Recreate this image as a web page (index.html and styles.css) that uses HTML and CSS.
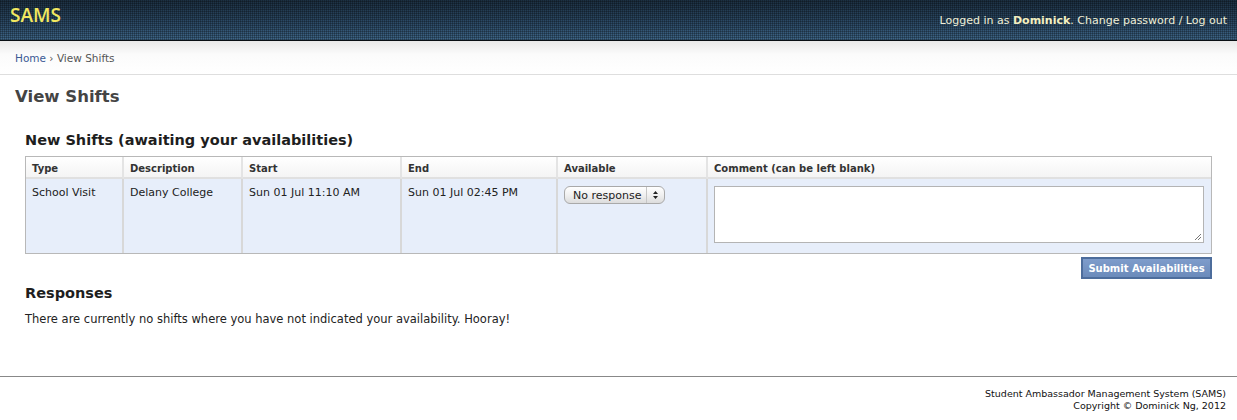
FILE: index.html
```html
<!DOCTYPE html>
<html>
<head>
<meta charset="utf-8">
<title>SAMS - View Shifts</title>
<link rel="stylesheet" href="styles.css">
</head>
<body>
<header class="topbar">
  <div class="brand">SAMS</div>
  <div class="userinfo">Logged in as <b>Dominick</b>. Change password / Log out</div>
</header>
<div class="crumbs"><a class="crumb-link">Home</a> › View Shifts</div>
<main class="content">
  <h1 class="page-title">View Shifts</h1>
  <section class="block">
    <h2 class="block-title">New Shifts (awaiting your availabilities)</h2>
    <table class="shifts">
      <thead>
        <tr>
          <th class="c-type">Type</th>
          <th class="c-desc">Description</th>
          <th class="c-start">Start</th>
          <th class="c-end">End</th>
          <th class="c-avail">Available</th>
          <th class="c-comment">Comment (can be left blank)</th>
        </tr>
      </thead>
      <tbody>
        <tr>
          <td>School Visit</td>
          <td>Delany College</td>
          <td>Sun 01 Jul 11:10 AM</td>
          <td>Sun 01 Jul 02:45 PM</td>
          <td><div class="select"><span class="select-label">No response</span><span class="select-arrows"><svg width="7" height="10" viewBox="0 0 7 10"><path d="M3.5 1 L6 4 H1 Z M3.5 9 L6 6 H1 Z" fill="#222"/></svg></span></div></td>
          <td><div class="textarea"><svg class="grip" width="8" height="8" viewBox="0 0 8 8"><path d="M7 1 L1 7 M7 4 L4 7" stroke="#777" stroke-width="1"/></svg></div></td>
        </tr>
      </tbody>
    </table>
    <div class="actions"><button class="submit">Submit Availabilities</button></div>
    <h2 class="block-title resp">Responses</h2>
    <p class="note">There are currently no shifts where you have not indicated your availability. Hooray!</p>
  </section>
</main>
<footer class="footer">
  <div>Student Ambassador Management System (SAMS)</div>
  <div>Copyright © Dominick Ng, 2012</div>
</footer>
</body>
</html>
```
FILE: styles.css
```css
html, body { margin: 0; padding: 0; background: #fff; }
body {
  font-family: "DejaVu Sans", "Liberation Sans", sans-serif;
  font-size: 11px;
  color: #222;
}
.topbar {
  height: 40px;
  border-bottom: 1px solid #0a0f14;
  display: flex;
  align-items: center;
  justify-content: space-between;
  padding: 0 10px;
  background-color: #26405a;
  background-image:
    repeating-linear-gradient(90deg, rgba(0,0,0,0.25) 0 1px, transparent 1px 2px),
    repeating-linear-gradient(0deg, rgba(0,0,0,0.25) 0 1px, transparent 1px 2px),
    linear-gradient(180deg, #1c3042 0%, #2d4c69 60%, #3e6688 100%);
}
.brand {
  font-family: "Open Sans", "DejaVu Sans", sans-serif;
  color: #f2e860;
  font-size: 19px;
  font-weight: 600;
  margin-top: -10px;
}
.userinfo {
  color: #f0efd6;
  font-size: 11px;
  margin-top: 1px;
}
.userinfo b { color: #f4f0c0; }
.crumbs {
  height: 32px;
  line-height: 33px;
  padding: 1px 0 0 15px;
  border-bottom: 1px solid #dedede;
  background: linear-gradient(180deg, #e9e9e9 0%, #fbfbfb 40%, #ffffff 100%);
  color: #555;
  font-size: 10.5px;
}
.crumb-link { color: #3a5a94; }
.content { padding: 0 15px; }
.page-title {
  margin: 11px 0 0 0;
  font-size: 16.5px;
  line-height: 22px;
  color: #444;
}
.block { padding-left: 10px; }
.block-title {
  margin: 21px 0 0 0;
  font-size: 14.5px;
  line-height: 22px;
  color: #1e1e1e;
}
.shifts {
  margin-top: 5px;
  width: 1187px;
  border-collapse: separate;
  border-spacing: 0;
  border: 1px solid #b8b8b8;
}
.shifts th {
  text-align: left;
  font-size: 10px;
  color: #333;
  height: 18px;
  padding: 2px 6px 0 6px;
  background: linear-gradient(180deg, #ffffff 0%, #f4f4f4 100%);
  border-bottom: 2px solid #e0e0e0;
  border-right: 2px solid #e4e4e4;
}
.shifts td {
  vertical-align: top;
  background: #e7eefa;
  height: 74px;
  padding: 7px 6px 0 6px;
  font-size: 11px;
  color: #222;
  border-right: 2px solid #d8d8d8;
  box-sizing: border-box;
}
.shifts th:last-child, .shifts td:last-child { border-right: none; }
.c-type { width: 84px; }
.c-desc { width: 105px; }
.c-start { width: 145px; }
.c-end { width: 142px; }
.c-avail { width: 136px; }
.select {
  display: inline-flex;
  align-items: center;
  margin-top: 0;
  height: 18px;
  width: 101px;
  border: 1px solid #a9a9a9;
  border-radius: 6px;
  background: linear-gradient(180deg, #ffffff 0%, #f0f0f0 50%, #dcdcdc 100%);
  box-sizing: border-box;
  font-size: 11px;
}
.select-label { flex: 1; padding-left: 8px; }
.select-arrows {
  width: 17px;
  height: 100%;
  border-left: 1px solid #c6c6c6;
  display: flex;
  align-items: center;
  justify-content: center;
}
.textarea {
  position: relative;
  margin-top: 0;
  height: 57px;
  width: 490px;
  border: 1px solid #b4b4b4;
  background: #fff;
  box-sizing: border-box;
}
.grip { position: absolute; right: 1px; bottom: 1px; }
.actions {
  width: 1187px;
  display: flex;
  justify-content: flex-end;
  margin-top: 3px;
}
.submit {
  font-family: inherit;
  font-size: 10px;
  font-weight: bold;
  color: #fff;
  height: 22px;
  width: 131px;
  padding: 0;
  border: 2px solid #4d6d9c;
  background: linear-gradient(180deg, #7e9ccb 0%, #6b8bbb 100%);
}
.block-title.resp { margin-top: 3px; }
.note {
  margin: 8px 0 0 0;
  font-size: 11.5px;
  color: #222;
}
.footer {
  margin-top: 50px;
  border-top: 1px solid #888;
  padding: 11px 11px 0 0;
  text-align: right;
  font-size: 9.5px;
  line-height: 12px;
  color: #111;
}
```
